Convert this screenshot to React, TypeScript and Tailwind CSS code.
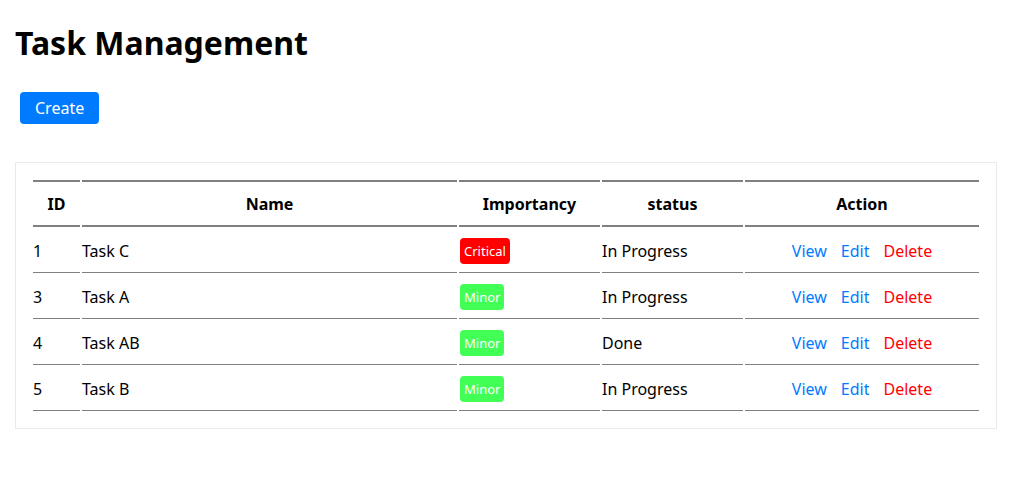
import React from "react";

type Task = { id: number; name: string; importancy: "Critical" | "Minor"; status: string };

const tasks: Task[] = [
  { id: 1, name: "Task C", importancy: "Critical", status: "In Progress" },
  { id: 3, name: "Task A", importancy: "Minor", status: "In Progress" },
  { id: 4, name: "Task AB", importancy: "Minor", status: "Done" },
  { id: 5, name: "Task B", importancy: "Minor", status: "In Progress" },
];

export default function App() {
  const th = "h-[47px] border-y-2 border-[#808080] text-center align-middle font-bold p-0 pt-px";
  const td = "h-[44px] border-b border-[#808080] align-middle text-left p-0 pt-px";
  return (
    <div className="px-[15px] text-black bg-white min-h-screen" style={{ fontFamily: '"Noto Sans", sans-serif' }}>
      <h1 className="text-[32px] font-bold leading-[normal] my-[21.44px]">Task Management</h1>
      <button className="ml-[5px] mt-[6px] h-[32px] px-[15px] rounded-[4px] bg-[#007bff] text-white text-[16px] leading-[normal]">
        Create
      </button>
      <div className="mt-[38px] w-[982px] border border-[#eaeaea] p-[15px]">
        <table className="w-full table-fixed border-separate border-spacing-[2px] text-[16px]">
          <colgroup>
            <col className="w-[47px]" />
            <col className="w-[375px]" />
            <col className="w-[141px]" />
            <col className="w-[141px]" />
            <col className="w-[234px]" />
          </colgroup>
          <thead>
            <tr>
              <th className={th}>ID</th>
              <th className={th}>Name</th>
              <th className={th}>Importancy</th>
              <th className={th}>status</th>
              <th className={th}>Action</th>
            </tr>
          </thead>
          <tbody>
            {tasks.map((t) => (
              <tr key={t.id}>
                <td className={td}>{t.id}</td>
                <td className={td}>{t.name}</td>
                <td className={td}>
                  <span
                    className={
                      "ml-px inline-block rounded-[4px] px-1 py-1 text-[13px] leading-[normal] text-white " +
                      (t.importancy === "Critical" ? "bg-[#ff0000]" : "bg-[#42ff55]")
                    }
                  >
                    {t.importancy}
                  </span>
                </td>
                <td className={td}>{t.status}</td>
                <td className={td}>
                  <div className="flex justify-center gap-[14px]">
                    <a className="text-[#007bff] cursor-pointer">View</a>
                    <a className="text-[#007bff] cursor-pointer">Edit</a>
                    <a className="text-[#ff0000] cursor-pointer">Delete</a>
                  </div>
                </td>
              </tr>
            ))}
          </tbody>
        </table>
      </div>
    </div>
  );
}
